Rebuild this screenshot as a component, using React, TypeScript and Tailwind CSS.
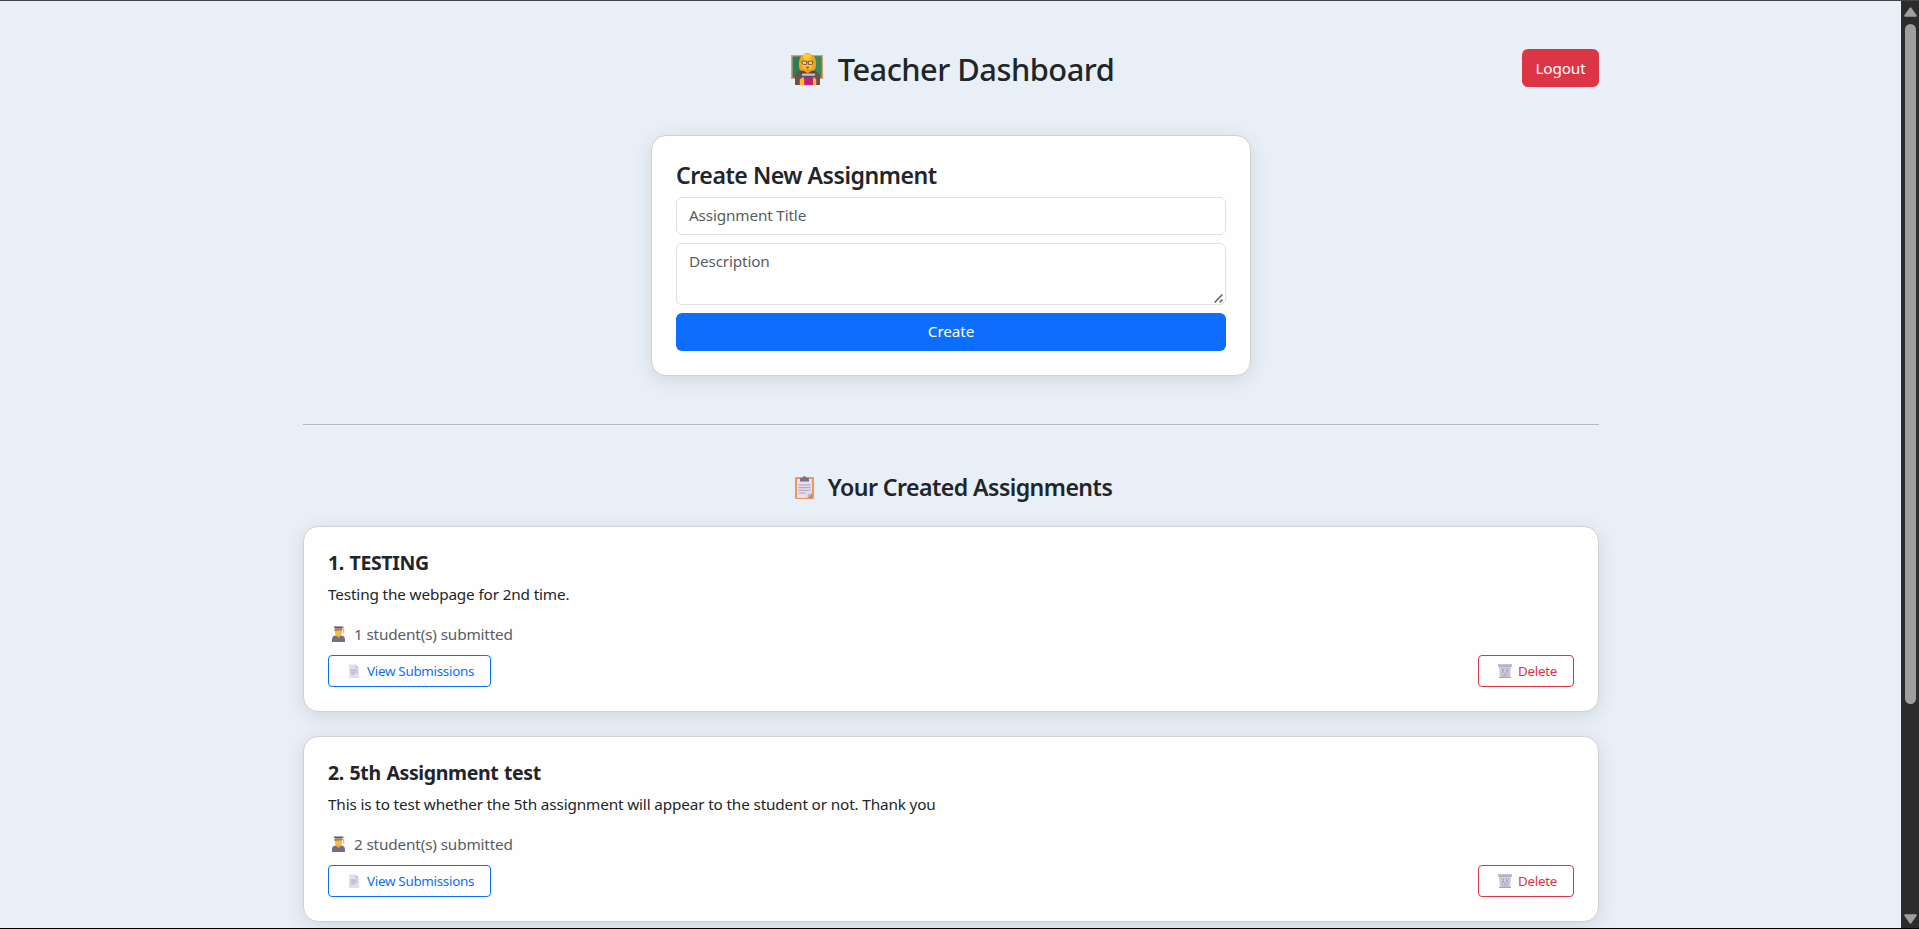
import React from "react";

type Assignment = { title: string; description: string; submitted: number };

const assignments: Assignment[] = [
  { title: "TESTING", description: "Testing the webpage for 2nd time.", submitted: 1 },
  {
    title: "5th Assignment test",
    description: "This is to test whether the 5th assignment will appear to the student or not. Thank you",
    submitted: 2,
  },
];

const cardClass =
  "rounded-[15px] border border-[#d0d0d0] bg-[#fefefe] p-6 shadow-[0_4px_20px_rgba(0,0,0,0.1)]";

function TeacherIcon() {
  return (
    <svg className="h-8 w-8 shrink-0" viewBox="0 0 32 32" aria-hidden="true">
      <rect x="0" y="2" width="32" height="24" fill="#e39a6c" />
      <rect x="1.6" y="3.4" width="28.8" height="21.2" fill="#2f7d57" />
      <rect x="22" y="3.4" width="8.4" height="21.2" fill="#3a8a5a" />
      <path d="M4 32v-8c0-4 3-6.500 7-6.500h10c4 0 8 2.500 8 6.500v8z" fill="#6b5052" />
      <path d="M8 12c0-7 2-9.500 5-10.500C14.500-.5 18-.5 20 1.500c3.500 1 5 4 5 9.500 0 4-1 7-4 7h-9c-3 0-4-2-4-6z" fill="#f0a41c" />
      <path d="M12 2.500c2-2.500 6-2.500 8 0l-1 3h-6z" fill="#ffcf35" />
      <ellipse cx="16.500" cy="11" rx="5.500" ry="6.500" fill="#fbc03a" />
      <path d="M13 16h7v4h-7z" fill="#e39b22" />
      <path d="M11 8.200h4.600v3.200H12L11 9.800zM17.400 8.200H22l-.8 3.200h-3.800zM15.600 9h1.800" fill="#f4d98a" stroke="#6b4a50" strokeWidth=".9" />
      <path d="M15 14.200h3.200l-1.600 1z" fill="#c8202f" stroke="#c8202f" strokeWidth=".6" />
      <path d="M8 18.500l4-1 4.500 3 5-3 4 1-3 3H10z" fill="#5a434b" />
      <rect x="11" y="20.500" width="13" height="4" fill="#c4c0d4" />
      <rect x="11" y="22.800" width="13" height="1.200" fill="#5a4a68" />
      <rect x="13" y="24" width="9" height="8" fill="#c81c7c" />
      <path d="M8.800 26.500c1-1.500 3-2 4.400-1V32H8.800zM22 25.500c1.400-1 2.400-.5 3.200 1V32H22z" fill="#fbbd26" />
    </svg>
  );
}

function ClipboardIcon() {
  return (
    <svg className="h-[23px] w-[19px] shrink-0" viewBox="0 0 19 23" aria-hidden="true">
      <rect x="0" y="1" width="19" height="22" rx="1.200" fill="#e59a62" />
      <path d="M2 3h15v14l-4.500 5H2z" fill="#e8def2" />
      <path d="M17 17v5h-4.500z" fill="#d38552" />
      <path d="M12.500 17.500H17L12.500 22z" fill="#cbb9dc" />
      <path d="M5 5.500V3c0-.8.600-1 1.300-1h1.200c.2-2.400 3.800-2.400 4 0h1.200c.7 0 1.300.2 1.300 1v2.500z" fill="#7c6f82" />
      <path d="M3.500 9h12M3.500 11.700h12M3.500 14.300h12M3.500 17h7" stroke="#a99bb8" strokeWidth="1" />
    </svg>
  );
}

function StudentIcon() {
  return (
    <svg className="h-4 w-[13px] shrink-0" viewBox="0 0 13 16" aria-hidden="true">
      <path d="M0 16v-2.500c0-2.500 1.500-4 4-4h5c2.500 0 4 1.500 4 4V16z" fill="#796a88" />
      <path d="M4.500 8h4v2.500L6.500 12l-2-1.500z" fill="#e0a03a" />
      <path d="M2.800 2.500h7.400V6c0 2.500-1.700 4-3.700 4S2.800 8.500 2.800 6z" fill="#f7be45" />
      <path d="M2.500 3h8v1.300l-8 .6z" fill="#b77b45" />
      <path d="M1.500.4h10L10 2.500H3z" fill="#5d5263" />
      <path d="M11.700 1v6.500" stroke="#d8a963" strokeWidth=".9" />
    </svg>
  );
}

function DocumentIcon() {
  return (
    <svg className="h-3.5 w-2.5 shrink-0" viewBox="0 0 10 14" aria-hidden="true">
      <path d="M0 .5h6.500L10 4v10H0z" fill="#e6dcf0" />
      <path d="M6.500.5L10 4H6.500z" fill="#c9bbd9" />
      <path d="M1.800 6h6.400M1.800 8h6.400M1.800 10h4" stroke="#a99db8" strokeWidth=".9" />
    </svg>
  );
}

function TrashIcon() {
  return (
    <svg className="h-3.5 w-3.5 shrink-0" viewBox="0 0 14 14" aria-hidden="true">
      <path d="M.8 2h12.400L12.200 14H1.800z" fill="#d3cfde" />
      <path d="M3.200 4l1.500 3L3.500 9.500 5 12M6 4l-1 3 1.500 3L6 12M8 4l1 3-1.500 3L8 12M10.800 4L9.500 7l1 2.500L9 12" stroke="#9d96b0" strokeWidth=".7" fill="none" />
      <rect x="0" y="0" width="14" height="1.500" fill="#c3bfcd" />
      <rect x="0" y="1.500" width="14" height="1" fill="#979099" />
      <rect x="1.200" y="12.800" width="11.600" height="1.200" fill="#a7a0b8" />
    </svg>
  );
}

function AssignmentCard({ index, item }: { index: number; item: Assignment }) {
  return (
    <li className={cardClass + " h-[186px]"}>
      <h5 className="mb-[7px] text-[19.5px] leading-6 font-bold tracking-[-0.38px] [word-spacing:1px]">
        {index}. {item.title}
      </h5>
      <p className="mb-4 text-[15.3px] leading-6 tracking-[-0.145px]">{item.description}</p>
      <p className="mb-[9px] flex h-6 items-center gap-[9px] pl-1 text-[15.3px] leading-6 tracking-[-0.145px] text-[#595c5f]">
        <StudentIcon />
        {item.submitted} student(s) submitted
      </p>
      <div className="flex justify-between">
        <button className="flex h-[32px] w-[163px] items-center gap-2 rounded-[4px] border border-[#0d6efd] pl-5 text-[13.4px] tracking-[-0.29px] whitespace-nowrap text-[#0d6efd]">
          <DocumentIcon />
          View Submissions
        </button>
        <button className="flex h-[32px] w-24 items-center gap-[6px] rounded-[4px] border border-[#dc3545] pl-[19px] text-[13.4px] tracking-[-0.29px] text-[#dc3545]">
          <TrashIcon />
          Delete
        </button>
      </div>
    </li>
  );
}

function Scrollbar() {
  return (
    <div className="flex w-[18px] shrink-0 flex-col items-center bg-[#2c2c2c] pt-1.5 pb-1">
      <svg className="mb-[7px] h-2.5 w-[13px] shrink-0" viewBox="0 0 13 10" aria-hidden="true">
        <path d="M6.500 1.200L11.800 8.800H1.200z" fill="#9f9f9f" stroke="#9f9f9f" strokeWidth="2" strokeLinejoin="round" />
      </svg>
      <div className="h-[680px] w-[11px] shrink-0 rounded-full bg-[#9f9f9f]" />
      <svg className="mt-auto h-2.5 w-[13px] shrink-0" viewBox="0 0 13 10" aria-hidden="true">
        <path d="M6.500 8.800L11.800 1.200H1.200z" fill="#9f9f9f" stroke="#9f9f9f" strokeWidth="2" strokeLinejoin="round" />
      </svg>
    </div>
  );
}

export default function App() {
  return (
    <div className="flex h-[929px] w-[1919px] overflow-hidden border-t border-b border-t-[#444444] border-b-black bg-[#e8eff7] font-['Noto_Sans','Open_Sans',sans-serif] text-[#212529]">
      <main className="min-w-0 flex-1 overflow-hidden pt-12">
        <div className="ml-[303px] w-[1296px]">
          <header className="mb-12 grid h-[38px] grid-cols-[1fr_auto_1fr] items-center">
            <span />
            <h2 className="flex items-center gap-[15px] pt-[2px] pl-[3px] text-[30.8px] leading-[36px] font-medium tracking-[-0.5px] whitespace-nowrap">
              <TeacherIcon />
              Teacher Dashboard
            </h2>
            <button className="h-[38px] w-[77px] justify-self-end rounded-md bg-[#dc3545] text-[15.3px] tracking-[-0.12px] text-white">
              Logout
            </button>
          </header>

          <form className={cardClass + " mx-auto h-[241px] w-[600px]"} onSubmit={(e) => e.preventDefault()}>
            <h4 className="mb-[7px] pt-px text-[23.1px] leading-[29px] font-semibold tracking-[-0.47px]">
              Create New Assignment
            </h4>
            <input
              className="mb-2 block h-[38px] w-full rounded-md border border-[#dee2e6] bg-white px-3 pb-[2px] text-[15.3px] tracking-[-0.16px] placeholder:text-[#595c5f]"
              placeholder="Assignment Title"
            />
            <div className="relative mb-2">
              <textarea
                className="block h-[62px] w-full resize-none rounded-md border border-[#dee2e6] bg-white px-3 py-[5px] text-[15.3px] leading-6 tracking-[-0.16px] placeholder:text-[#595c5f]"
                placeholder="Description"
              />
              <svg className="absolute right-[3px] bottom-[2px] h-[9px] w-[9px]" viewBox="0 0 9 9" aria-hidden="true">
                <path d="M.6 8.400L8.400.6M5.600 8.400L8.400 5.600" stroke="#555555" strokeWidth="1.400" />
              </svg>
            </div>
            <button className="block h-[38px] w-full rounded-md bg-[#0d6efd] pb-px text-[15.3px] tracking-[-0.12px] text-white">
              Create
            </button>
          </form>

          <hr className="mt-12 mb-12 border-t border-[#b6b9c4]" />

          <h4 className="mb-6 flex h-[29px] items-center justify-center gap-[14px] pl-[5px] text-[23.1px] leading-[29px] font-semibold tracking-[-0.55px]">
            <ClipboardIcon />
            Your Created Assignments
          </h4>

          <ul className="flex flex-col gap-6">
            {assignments.map((item, i) => (
              <AssignmentCard key={item.title} index={i + 1} item={item} />
            ))}
          </ul>
        </div>
      </main>
      <Scrollbar />
    </div>
  );
}
